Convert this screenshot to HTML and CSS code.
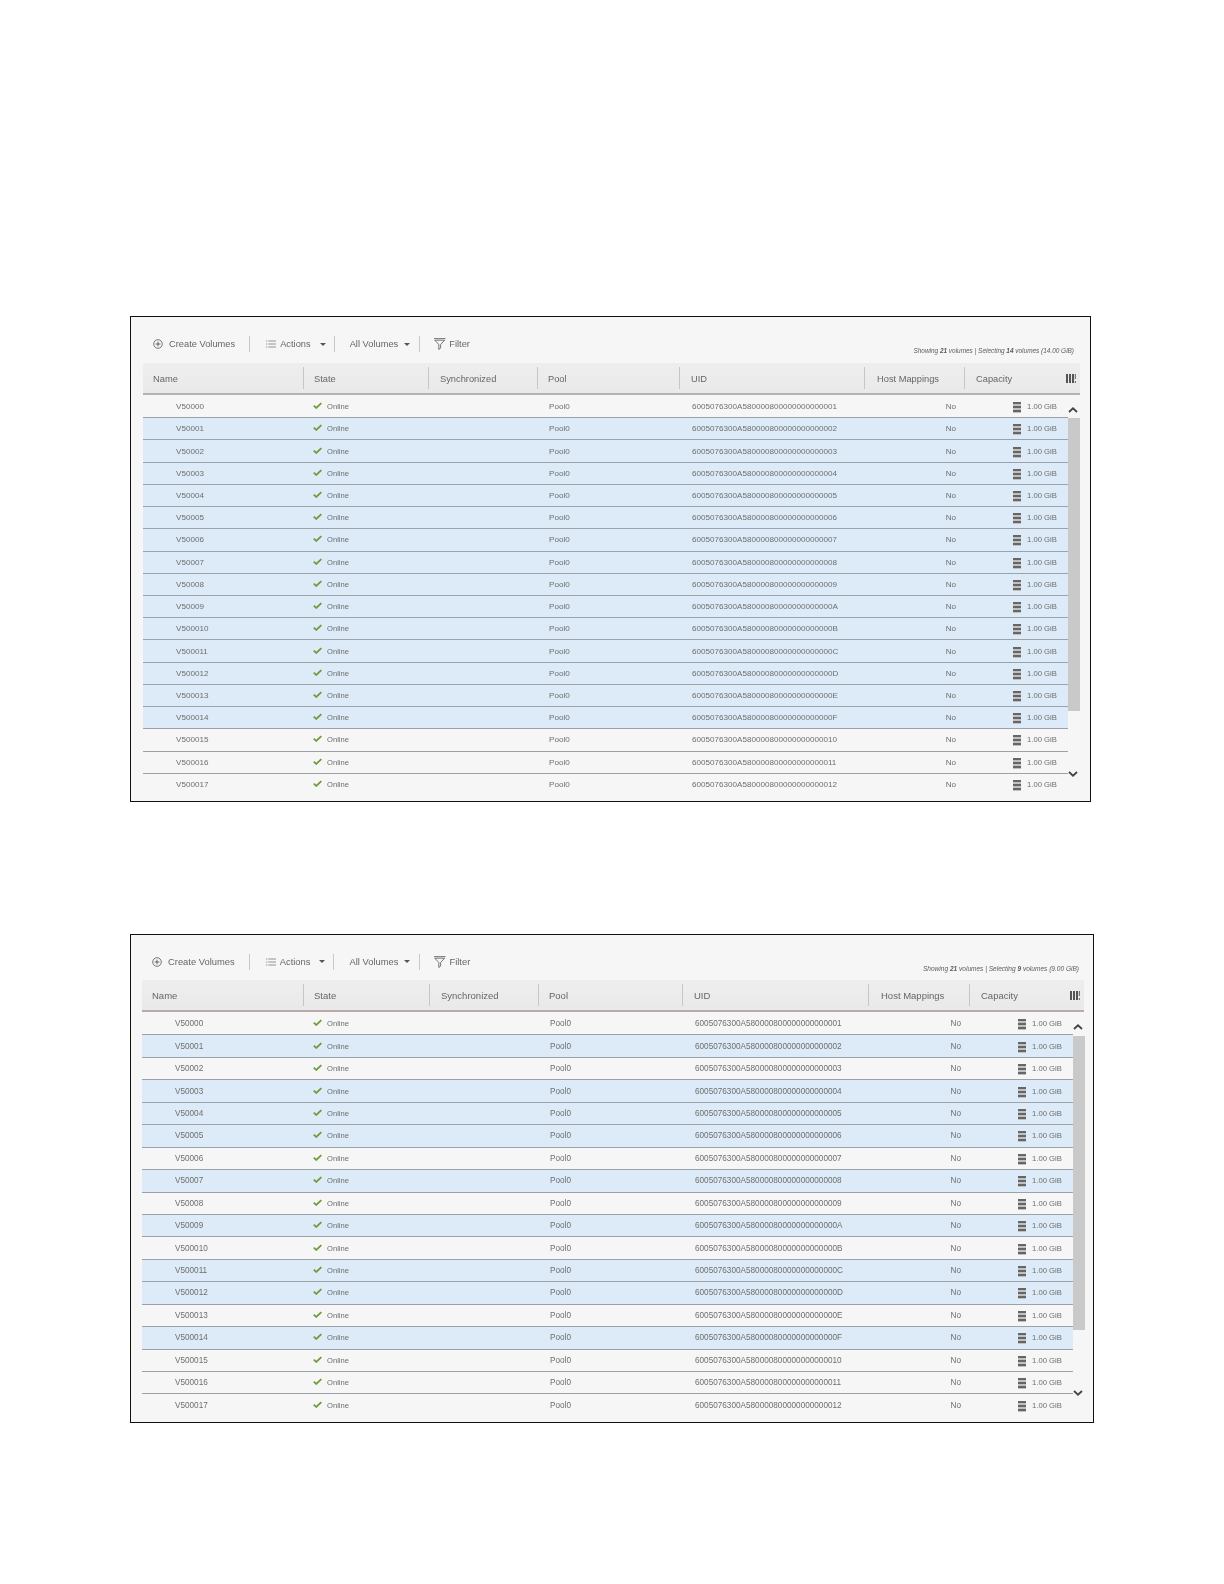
FILE: index.html
```html
<!DOCTYPE html>
<html lang="en">
<head>
<meta charset="utf-8">
<title>Volumes</title>
<link rel="stylesheet" href="styles.css">
</head>
<body>
<svg class="defs" width="0" height="0" aria-hidden="true">
  <symbol id="check" viewBox="0 0 10 7.5"><path d="M.8 4 3.600 6.500 9.300 1" fill="none" stroke="#6f9a3a" stroke-width="1.900"/></symbol>
  <symbol id="plus" viewBox="0 0 10 10"><circle cx="5" cy="5" r="4.300" fill="none" stroke="#555" stroke-width=".8"/><path d="M5 2.600v4.800M2.600 5h4.800" stroke="#555" stroke-width=".9"/></symbol>
  <symbol id="list" viewBox="0 0 10 8"><path d="M2.400 1h7.600M2.400 4h7.600M2.400 7h7.600M0 1h1.400M0 4h1.400M0 7h1.400" stroke="#888" stroke-width=".9"/></symbol>
  <symbol id="funnel" viewBox="0 0 12 12"><path d="M0 .6h11.500M.8 2.200l4 4.300v5l1.800-1.400V6.500l4-4.300z" fill="none" stroke="#555" stroke-width=".8"/></symbol>
  <symbol id="cols" viewBox="0 0 10 9"><path d="M0 0h2v9H0zM3 0h2v9H3zM6 0h2v9H6z" fill="#555"/><path d="M8.800 0h1.200v5H8.800zM8.800 7h1.200v2H8.800z" fill="#777"/></symbol>
  <symbol id="up" viewBox="0 0 10 6"><path d="M1 5 5 1.300 9 5" fill="none" stroke="#444" stroke-width="1.800"/></symbol>
  <symbol id="down" viewBox="0 0 10 6"><path d="M1 1 5 4.700 9 1" fill="none" stroke="#444" stroke-width="1.800"/></symbol>
</svg>

<main class="page">

<section class="panel panel-a">
  <div class="toolbar">
    <div class="tool tool-first"><svg class="i-plus"><use href="#plus"/></svg><span>Create Volumes</span></div>
    <div class="tool tool-actions"><svg class="i-list"><use href="#list"/></svg><span>Actions</span><i class="caret"></i></div>
    <div class="tool tool-all"><span>All Volumes</span><i class="caret"></i></div>
    <div class="tool tool-last"><svg class="i-funnel"><use href="#funnel"/></svg><span>Filter</span></div>
    <p class="status">Showing <b>21</b> volumes | Selecting <b>14</b> volumes (14.00 GiB)</p>
  </div>
  <div class="thead">
    <div class="th">Name</div><div class="th">State</div><div class="th">Synchronized</div><div class="th">Pool</div><div class="th">UID</div><div class="th">Host Mappings</div><div class="th th-last">Capacity<svg class="i-cols"><use href="#cols"/></svg></div>
  </div>
  <div class="tbody">
    <div class="rows">
      <div class="row"><span class="c-name">V50000</span><span class="c-state"><svg class="i-check"><use href="#check"/></svg>Online</span><span></span><span class="c-pool">Pool0</span><span class="c-uid">6005076300A580000800000000000001</span><span class="c-host">No</span><span class="c-cap"><i class="disk"></i>1.00 GiB</span></div>
      <div class="row sel"><span class="c-name">V50001</span><span class="c-state"><svg class="i-check"><use href="#check"/></svg>Online</span><span></span><span class="c-pool">Pool0</span><span class="c-uid">6005076300A580000800000000000002</span><span class="c-host">No</span><span class="c-cap"><i class="disk"></i>1.00 GiB</span></div>
      <div class="row sel"><span class="c-name">V50002</span><span class="c-state"><svg class="i-check"><use href="#check"/></svg>Online</span><span></span><span class="c-pool">Pool0</span><span class="c-uid">6005076300A580000800000000000003</span><span class="c-host">No</span><span class="c-cap"><i class="disk"></i>1.00 GiB</span></div>
      <div class="row sel"><span class="c-name">V50003</span><span class="c-state"><svg class="i-check"><use href="#check"/></svg>Online</span><span></span><span class="c-pool">Pool0</span><span class="c-uid">6005076300A580000800000000000004</span><span class="c-host">No</span><span class="c-cap"><i class="disk"></i>1.00 GiB</span></div>
      <div class="row sel"><span class="c-name">V50004</span><span class="c-state"><svg class="i-check"><use href="#check"/></svg>Online</span><span></span><span class="c-pool">Pool0</span><span class="c-uid">6005076300A580000800000000000005</span><span class="c-host">No</span><span class="c-cap"><i class="disk"></i>1.00 GiB</span></div>
      <div class="row sel"><span class="c-name">V50005</span><span class="c-state"><svg class="i-check"><use href="#check"/></svg>Online</span><span></span><span class="c-pool">Pool0</span><span class="c-uid">6005076300A580000800000000000006</span><span class="c-host">No</span><span class="c-cap"><i class="disk"></i>1.00 GiB</span></div>
      <div class="row sel"><span class="c-name">V50006</span><span class="c-state"><svg class="i-check"><use href="#check"/></svg>Online</span><span></span><span class="c-pool">Pool0</span><span class="c-uid">6005076300A580000800000000000007</span><span class="c-host">No</span><span class="c-cap"><i class="disk"></i>1.00 GiB</span></div>
      <div class="row sel"><span class="c-name">V50007</span><span class="c-state"><svg class="i-check"><use href="#check"/></svg>Online</span><span></span><span class="c-pool">Pool0</span><span class="c-uid">6005076300A580000800000000000008</span><span class="c-host">No</span><span class="c-cap"><i class="disk"></i>1.00 GiB</span></div>
      <div class="row sel"><span class="c-name">V50008</span><span class="c-state"><svg class="i-check"><use href="#check"/></svg>Online</span><span></span><span class="c-pool">Pool0</span><span class="c-uid">6005076300A580000800000000000009</span><span class="c-host">No</span><span class="c-cap"><i class="disk"></i>1.00 GiB</span></div>
      <div class="row sel"><span class="c-name">V50009</span><span class="c-state"><svg class="i-check"><use href="#check"/></svg>Online</span><span></span><span class="c-pool">Pool0</span><span class="c-uid">6005076300A58000080000000000000A</span><span class="c-host">No</span><span class="c-cap"><i class="disk"></i>1.00 GiB</span></div>
      <div class="row sel"><span class="c-name">V500010</span><span class="c-state"><svg class="i-check"><use href="#check"/></svg>Online</span><span></span><span class="c-pool">Pool0</span><span class="c-uid">6005076300A58000080000000000000B</span><span class="c-host">No</span><span class="c-cap"><i class="disk"></i>1.00 GiB</span></div>
      <div class="row sel"><span class="c-name">V500011</span><span class="c-state"><svg class="i-check"><use href="#check"/></svg>Online</span><span></span><span class="c-pool">Pool0</span><span class="c-uid">6005076300A58000080000000000000C</span><span class="c-host">No</span><span class="c-cap"><i class="disk"></i>1.00 GiB</span></div>
      <div class="row sel"><span class="c-name">V500012</span><span class="c-state"><svg class="i-check"><use href="#check"/></svg>Online</span><span></span><span class="c-pool">Pool0</span><span class="c-uid">6005076300A58000080000000000000D</span><span class="c-host">No</span><span class="c-cap"><i class="disk"></i>1.00 GiB</span></div>
      <div class="row sel"><span class="c-name">V500013</span><span class="c-state"><svg class="i-check"><use href="#check"/></svg>Online</span><span></span><span class="c-pool">Pool0</span><span class="c-uid">6005076300A58000080000000000000E</span><span class="c-host">No</span><span class="c-cap"><i class="disk"></i>1.00 GiB</span></div>
      <div class="row sel"><span class="c-name">V500014</span><span class="c-state"><svg class="i-check"><use href="#check"/></svg>Online</span><span></span><span class="c-pool">Pool0</span><span class="c-uid">6005076300A58000080000000000000F</span><span class="c-host">No</span><span class="c-cap"><i class="disk"></i>1.00 GiB</span></div>
      <div class="row"><span class="c-name">V500015</span><span class="c-state"><svg class="i-check"><use href="#check"/></svg>Online</span><span></span><span class="c-pool">Pool0</span><span class="c-uid">6005076300A580000800000000000010</span><span class="c-host">No</span><span class="c-cap"><i class="disk"></i>1.00 GiB</span></div>
      <div class="row"><span class="c-name">V500016</span><span class="c-state"><svg class="i-check"><use href="#check"/></svg>Online</span><span></span><span class="c-pool">Pool0</span><span class="c-uid">6005076300A580000800000000000011</span><span class="c-host">No</span><span class="c-cap"><i class="disk"></i>1.00 GiB</span></div>
      <div class="row row-end"><span class="c-name">V500017</span><span class="c-state"><svg class="i-check"><use href="#check"/></svg>Online</span><span></span><span class="c-pool">Pool0</span><span class="c-uid">6005076300A580000800000000000012</span><span class="c-host">No</span><span class="c-cap"><i class="disk"></i>1.00 GiB</span></div>
    </div>
    <div class="scroll">
      <div class="arrow arrow-up"><svg class="i-arrow"><use href="#up"/></svg></div>
      <div class="thumb"></div>
      <div class="arrow arrow-down"><svg class="i-arrow"><use href="#down"/></svg></div>
    </div>
  </div>
</section>

<section class="panel panel-b">
  <div class="toolbar">
    <div class="tool tool-first"><svg class="i-plus"><use href="#plus"/></svg><span>Create Volumes</span></div>
    <div class="tool tool-actions"><svg class="i-list"><use href="#list"/></svg><span>Actions</span><i class="caret"></i></div>
    <div class="tool tool-all"><span>All Volumes</span><i class="caret"></i></div>
    <div class="tool tool-last"><svg class="i-funnel"><use href="#funnel"/></svg><span>Filter</span></div>
    <p class="status">Showing <b>21</b> volumes | Selecting <b>9</b> volumes (9.00 GiB)</p>
  </div>
  <div class="thead">
    <div class="th">Name</div><div class="th">State</div><div class="th">Synchronized</div><div class="th">Pool</div><div class="th">UID</div><div class="th">Host Mappings</div><div class="th th-last">Capacity<svg class="i-cols"><use href="#cols"/></svg></div>
  </div>
  <div class="tbody">
    <div class="rows">
      <div class="row"><span class="c-name">V50000</span><span class="c-state"><svg class="i-check"><use href="#check"/></svg>Online</span><span></span><span class="c-pool">Pool0</span><span class="c-uid">6005076300A580000800000000000001</span><span class="c-host">No</span><span class="c-cap"><i class="disk"></i>1.00 GiB</span></div>
      <div class="row sel"><span class="c-name">V50001</span><span class="c-state"><svg class="i-check"><use href="#check"/></svg>Online</span><span></span><span class="c-pool">Pool0</span><span class="c-uid">6005076300A580000800000000000002</span><span class="c-host">No</span><span class="c-cap"><i class="disk"></i>1.00 GiB</span></div>
      <div class="row"><span class="c-name">V50002</span><span class="c-state"><svg class="i-check"><use href="#check"/></svg>Online</span><span></span><span class="c-pool">Pool0</span><span class="c-uid">6005076300A580000800000000000003</span><span class="c-host">No</span><span class="c-cap"><i class="disk"></i>1.00 GiB</span></div>
      <div class="row sel"><span class="c-name">V50003</span><span class="c-state"><svg class="i-check"><use href="#check"/></svg>Online</span><span></span><span class="c-pool">Pool0</span><span class="c-uid">6005076300A580000800000000000004</span><span class="c-host">No</span><span class="c-cap"><i class="disk"></i>1.00 GiB</span></div>
      <div class="row sel"><span class="c-name">V50004</span><span class="c-state"><svg class="i-check"><use href="#check"/></svg>Online</span><span></span><span class="c-pool">Pool0</span><span class="c-uid">6005076300A580000800000000000005</span><span class="c-host">No</span><span class="c-cap"><i class="disk"></i>1.00 GiB</span></div>
      <div class="row sel"><span class="c-name">V50005</span><span class="c-state"><svg class="i-check"><use href="#check"/></svg>Online</span><span></span><span class="c-pool">Pool0</span><span class="c-uid">6005076300A580000800000000000006</span><span class="c-host">No</span><span class="c-cap"><i class="disk"></i>1.00 GiB</span></div>
      <div class="row"><span class="c-name">V50006</span><span class="c-state"><svg class="i-check"><use href="#check"/></svg>Online</span><span></span><span class="c-pool">Pool0</span><span class="c-uid">6005076300A580000800000000000007</span><span class="c-host">No</span><span class="c-cap"><i class="disk"></i>1.00 GiB</span></div>
      <div class="row sel"><span class="c-name">V50007</span><span class="c-state"><svg class="i-check"><use href="#check"/></svg>Online</span><span></span><span class="c-pool">Pool0</span><span class="c-uid">6005076300A580000800000000000008</span><span class="c-host">No</span><span class="c-cap"><i class="disk"></i>1.00 GiB</span></div>
      <div class="row"><span class="c-name">V50008</span><span class="c-state"><svg class="i-check"><use href="#check"/></svg>Online</span><span></span><span class="c-pool">Pool0</span><span class="c-uid">6005076300A580000800000000000009</span><span class="c-host">No</span><span class="c-cap"><i class="disk"></i>1.00 GiB</span></div>
      <div class="row sel"><span class="c-name">V50009</span><span class="c-state"><svg class="i-check"><use href="#check"/></svg>Online</span><span></span><span class="c-pool">Pool0</span><span class="c-uid">6005076300A58000080000000000000A</span><span class="c-host">No</span><span class="c-cap"><i class="disk"></i>1.00 GiB</span></div>
      <div class="row"><span class="c-name">V500010</span><span class="c-state"><svg class="i-check"><use href="#check"/></svg>Online</span><span></span><span class="c-pool">Pool0</span><span class="c-uid">6005076300A58000080000000000000B</span><span class="c-host">No</span><span class="c-cap"><i class="disk"></i>1.00 GiB</span></div>
      <div class="row sel"><span class="c-name">V500011</span><span class="c-state"><svg class="i-check"><use href="#check"/></svg>Online</span><span></span><span class="c-pool">Pool0</span><span class="c-uid">6005076300A58000080000000000000C</span><span class="c-host">No</span><span class="c-cap"><i class="disk"></i>1.00 GiB</span></div>
      <div class="row sel"><span class="c-name">V500012</span><span class="c-state"><svg class="i-check"><use href="#check"/></svg>Online</span><span></span><span class="c-pool">Pool0</span><span class="c-uid">6005076300A58000080000000000000D</span><span class="c-host">No</span><span class="c-cap"><i class="disk"></i>1.00 GiB</span></div>
      <div class="row"><span class="c-name">V500013</span><span class="c-state"><svg class="i-check"><use href="#check"/></svg>Online</span><span></span><span class="c-pool">Pool0</span><span class="c-uid">6005076300A58000080000000000000E</span><span class="c-host">No</span><span class="c-cap"><i class="disk"></i>1.00 GiB</span></div>
      <div class="row sel"><span class="c-name">V500014</span><span class="c-state"><svg class="i-check"><use href="#check"/></svg>Online</span><span></span><span class="c-pool">Pool0</span><span class="c-uid">6005076300A58000080000000000000F</span><span class="c-host">No</span><span class="c-cap"><i class="disk"></i>1.00 GiB</span></div>
      <div class="row"><span class="c-name">V500015</span><span class="c-state"><svg class="i-check"><use href="#check"/></svg>Online</span><span></span><span class="c-pool">Pool0</span><span class="c-uid">6005076300A580000800000000000010</span><span class="c-host">No</span><span class="c-cap"><i class="disk"></i>1.00 GiB</span></div>
      <div class="row"><span class="c-name">V500016</span><span class="c-state"><svg class="i-check"><use href="#check"/></svg>Online</span><span></span><span class="c-pool">Pool0</span><span class="c-uid">6005076300A580000800000000000011</span><span class="c-host">No</span><span class="c-cap"><i class="disk"></i>1.00 GiB</span></div>
      <div class="row row-end"><span class="c-name">V500017</span><span class="c-state"><svg class="i-check"><use href="#check"/></svg>Online</span><span></span><span class="c-pool">Pool0</span><span class="c-uid">6005076300A580000800000000000012</span><span class="c-host">No</span><span class="c-cap"><i class="disk"></i>1.00 GiB</span></div>
    </div>
    <div class="scroll">
      <div class="arrow arrow-up"><svg class="i-arrow"><use href="#up"/></svg></div>
      <div class="thumb"></div>
      <div class="arrow arrow-down"><svg class="i-arrow"><use href="#down"/></svg></div>
    </div>
  </div>
</section>

</main>
</body>
</html>
```

FILE: styles.css
```css
* { box-sizing: border-box; }
html, body { margin: 0; background: #fff; }
body { font-family: "Liberation Sans", Arial, sans-serif; color: #666; }
.defs { position: absolute; }

.page { padding: 316px 0 0 130px; height: 1584px; overflow: hidden; }

.panel {
  border: 1px solid #111;
  background: #f6f6f6;
  overflow: hidden;
}
.panel-a {
  width: 961px; height: 486px;
  padding-left: 12px; padding-right: 10px;
  --tool-font: 9.3px;
  --th-font: 9.3px;
  --row-font: 8.1px;
  --row-h: 22.22px;
  --tb-h: 46px;
  --status-font: 6.45px;
  --status-gap: 9px;
  --th-top: 1px;
  --head-cols: 161px 125px 109px 142px 185px 100px 114px;
  --row-cols: 160px 125px 109px 142px 185px 100px 104px;
  --head-rule: #b4b4b4;
  --status-right: 16px;
  --thumb-h: 293px;
  --up-h: 22px;
}
.panel-b {
  width: 964px; height: 489px;
  margin-top: 132px;
  padding-left: 11px; padding-right: 9px;
  --tool-font: 9.4px;
  --th-font: 9.5px;
  --row-font: 8.2px;
  --row-h: 22.44px;
  --tb-h: 45px;
  --status-font: 6.55px;
  --status-gap: 8px;
  --th-top: 0px;
  --head-cols: 162px 126px 109px 144px 186px 101px 113px;
  --row-cols: 161px 126px 109px 144px 186px 101px 104px;
  --head-rule: #bba9ab;
  --status-right: 15px;
  --thumb-h: 294px;
  --up-h: 23px;
}

/* toolbar */
.toolbar {
  height: var(--tb-h);
  display: flex;
  align-items: center;
  padding: 8px var(--status-right) 0 10px;
  margin-right: -10px;
  font-size: var(--tool-font);
  color: #666;
  filter: blur(.3px);
}
.tool {
  display: flex;
  align-items: center;
  gap: 4px;
  height: 16px;
  padding: 0 9px 0 16px;
  border-right: 1px solid #c8c8c8;
  white-space: nowrap;
}
.tool-first { padding: 0 14px 0 0; gap: 6px; }
.tool-actions { padding-right: 8px; }
.tool-all { padding-left: 15px; }
.tool-last { border-right: 0; padding-left: 14px; gap: 3px; }
.caret {
  width: 0; height: 0;
  margin-left: 2px;
  border: 3px solid transparent;
  border-top: 3px solid #555;
  border-bottom: 0;
}
.tool-actions .caret { margin-left: 5px; }
.status {
  margin: 0 0 var(--status-gap) auto;
  align-self: flex-end;
  font-size: var(--status-font);
  font-style: italic;
  color: #5c5c5c;
  white-space: nowrap;
}
.status b { font-weight: 700; }

.i-plus { width: 10px; height: 10px; }
.i-list { width: 10px; height: 8px; }
.i-funnel { width: 12px; height: 12px; }
.i-cols { width: 10px; height: 9px; margin-left: auto; margin-right: 3px; }
.i-check { width: 9px; height: 7px; margin: -2px 5px 0 0; flex: none; }
.i-arrow { width: 10px; height: 6px; display: block; }

/* header */
.thead {
  display: grid;
  grid-template-columns: var(--head-cols);
  height: 32px;
  background: linear-gradient(#eeeeee, #e9e9e9);
  border-bottom: 2px solid var(--head-rule);
  font-size: var(--th-font);
  color: #666;
  filter: blur(.3px);
}
.th {
  display: flex;
  align-items: center;
  padding-left: 10px;
  padding-top: var(--th-top);
  margin: 4px 0 4px;
  border-right: 1px solid #c6c6c6;
}
.th-last { border-right: 0; }
.th:nth-child(3) { padding-left: 11px; }
.th:nth-child(4) { padding-left: 10px; }
.th:nth-child(5), .th:nth-child(7) { padding-left: 11px; }
.th:nth-child(6) { padding-left: 12px; }

/* body */
.tbody { display: flex; padding-top: 1px; filter: blur(.3px); }
.rows { flex: none; }
.row {
  display: grid;
  grid-template-columns: var(--row-cols);
  align-items: center;
  height: var(--row-h);
  border-bottom: 1px solid #9aa2aa;
  font-size: var(--row-font);
  color: #6e6e6e;
  white-space: nowrap;
}
.row.sel { background: #dcebf7; }
.row-end { border-bottom: 0; }

.c-name { padding-left: 33px; }
.c-state { display: flex; align-items: center; padding-left: 10px; font-size: 7.6px; }
.c-pool { padding-left: 12px; }
.c-uid { padding-left: 13px; }
.c-host { text-align: right; padding-right: 8px; }
.c-cap { display: flex; align-items: center; padding-left: 49px; font-size: 7.7px; }

.disk {
  width: 8px; height: 11px;
  margin: 2px 6px 0 0;
  flex: none;
  background: repeating-linear-gradient(#666 0 2.200px, #c0c0c0 2.200px 4px);
}

/* scrollbar */
.scroll {
  flex: 1;
  display: flex;
  flex-direction: column;
  align-items: stretch;
}
.arrow { display: flex; justify-content: center; padding-right: 2px; }
.arrow-up { height: var(--up-h); padding-top: 11px; }
.thumb { background: #c9c9c9; height: var(--thumb-h); }
.arrow-down { margin-top: 60px; }
```
